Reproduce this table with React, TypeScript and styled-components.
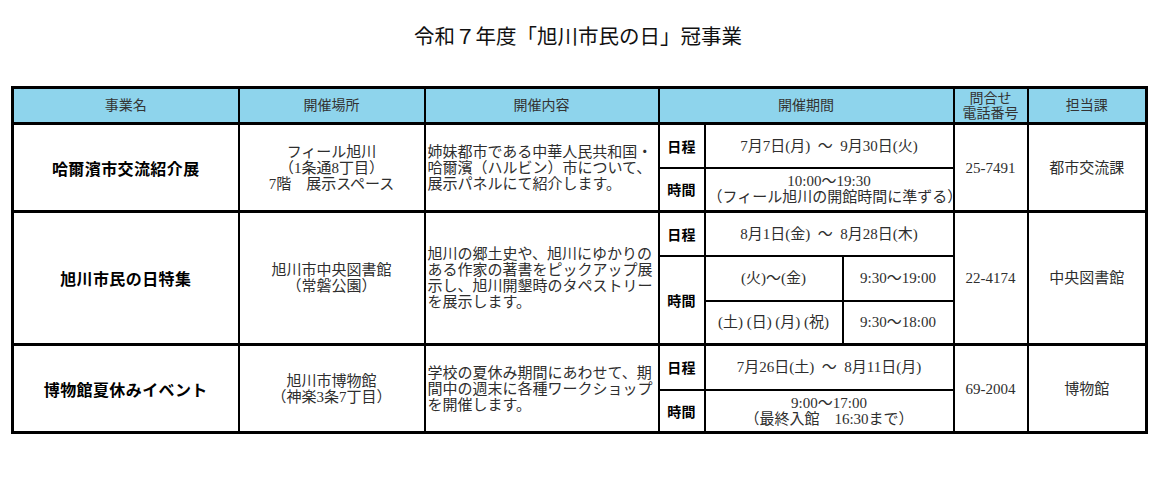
import styled, { createGlobalStyle } from 'styled-components';

const SERIF = `"Liberation Serif", "Noto Sans CJK JP", serif`;
const GOTHIC = `"Noto Sans CJK JP", "Liberation Sans", sans-serif`;

const GlobalStyle = createGlobalStyle`
  body {
    margin: 0;
    background: #fff;
  }
`;

const Page = styled.div`
  width: 1156px;
  height: 491px;
  padding-top: 21px;
  box-sizing: border-box;
`;

const Title = styled.h1`
  margin: 0 0 37px;
  text-align: center;
  font: 400 20.5px/28px ${GOTHIC};
  color: #111;
`;

const Table = styled.table`
  margin-left: 11px;
  width: 1134px;
  border-collapse: collapse;
  table-layout: fixed;
  border: 3px solid #000;
  color: #222;
`;

const HeadRow = styled.tr`
  height: 36px;
  background: #8ed4ec;
`;

const HeadCell = styled.th`
  border: 2px solid #000;
  border-bottom: 3px solid #000;
  padding: 0;
  text-align: center;
  vertical-align: middle;
  font: 400 14px/15px ${SERIF};
  color: #333;
`;

const Group = styled.tbody`
  border-top: 3px solid #000;
`;

const SubRow = styled.tr<{ $h: number }>`
  height: ${(p) => p.$h}px;
`;

const Cell = styled.td<{ $align?: 'left' | 'center' }>`
  border: 2px solid #000;
  padding: 0 2px;
  text-align: ${(p) => p.$align ?? 'center'};
  vertical-align: middle;
  white-space: nowrap;
  font: 400 15px/16px ${SERIF};
  color: #2e2e2e;
`;

const NameCell = styled(Cell)`
  font: 700 16px/20px ${GOTHIC};
  letter-spacing: 0.4px;
  color: #000;
`;

const LabelCell = styled(Cell)`
  font: 700 14px/16px ${GOTHIC};
  letter-spacing: 0.3px;
  color: #000;
`;

const Line = styled.span`
  display: block;
`;

type Slot = { days?: string; hours: string[] };

interface Event {
  name: string;
  place: string[];
  content: string[];
  date: string;
  times: Slot[];
  tel: string;
  dept: string;
  heights: number[];
}

const sp = '\u00a0\u00a0';

const events: Event[] = [
  {
    name: '哈爾濱市交流紹介展',
    place: ['フィール旭川', '（1条通8丁目）', '7階　展示スペース'],
    content: [
      '姉妹都市である中華人民共和国・',
      '哈爾濱（ハルビン）市について、',
      '展示パネルにて紹介します。',
    ],
    date: `7月7日(月)${sp}～${sp}9月30日(火)`,
    times: [{ hours: ['10:00～19:30', '（フィール旭川の開館時間に準ずる）'] }],
    tel: '25-7491',
    dept: '都市交流課',
    heights: [44, 44],
  },
  {
    name: '旭川市民の日特集',
    place: ['旭川市中央図書館', '（常磐公園）'],
    content: [
      '旭川の郷土史や、旭川にゆかりの',
      'ある作家の著書をピックアップ展',
      '示し、旭川開墾時のタペストリー',
      'を展示します。',
    ],
    date: `8月1日(金)${sp}～${sp}8月28日(木)`,
    times: [
      { days: '(火)～(金)', hours: ['9:30～19:00'] },
      { days: '(土) (日) (月) (祝)', hours: ['9:30～18:00'] },
    ],
    tel: '22-4174',
    dept: '中央図書館',
    heights: [44, 45, 44],
  },
  {
    name: '博物館夏休みイベント',
    place: ['旭川市博物館', '（神楽3条7丁目）'],
    content: [
      '学校の夏休み期間にあわせて、期',
      '間中の週末に各種ワークショップ',
      'を開催します。',
    ],
    date: `7月26日(土)${sp}～${sp}8月11日(月)`,
    times: [{ hours: ['9:00～17:00', '（最終入館　16:30まで）'] }],
    tel: '69-2004',
    dept: '博物館',
    heights: [45, 43],
  },
];

const Lines = ({ items }: { items: string[] }) => (
  <>
    {items.map((l, i) => (
      <Line key={i}>{l}</Line>
    ))}
  </>
);

function EventRows({ ev }: { ev: Event }) {
  const span = 1 + ev.times.length;
  return (
    <Group>
      <SubRow $h={ev.heights[0]}>
        <NameCell rowSpan={span}>{ev.name}</NameCell>
        <Cell rowSpan={span}>
          <Lines items={ev.place} />
        </Cell>
        <Cell rowSpan={span} $align="left">
          <Lines items={ev.content} />
        </Cell>
        <LabelCell>日程</LabelCell>
        <Cell colSpan={2}>{ev.date}</Cell>
        <Cell rowSpan={span}>{ev.tel}</Cell>
        <Cell rowSpan={span}>{ev.dept}</Cell>
      </SubRow>
      {ev.times.map((t, i) => (
        <SubRow key={i} $h={ev.heights[i + 1]}>
          {i === 0 && <LabelCell rowSpan={ev.times.length}>時間</LabelCell>}
          {t.days ? (
            <>
              <Cell>{t.days}</Cell>
              <Cell>
                <Lines items={t.hours} />
              </Cell>
            </>
          ) : (
            <Cell colSpan={2}>
              <Lines items={t.hours} />
            </Cell>
          )}
        </SubRow>
      ))}
    </Group>
  );
}

export default function App() {
  return (
    <Page>
      <GlobalStyle />
      <Title>令和７年度「旭川市民の日」冠事業</Title>
      <Table>
        <colgroup>
          <col style={{ width: 226 }} />
          <col style={{ width: 186 }} />
          <col style={{ width: 234 }} />
          <col style={{ width: 46 }} />
          <col style={{ width: 138 }} />
          <col style={{ width: 111 }} />
          <col style={{ width: 74 }} />
          <col style={{ width: 119 }} />
        </colgroup>
        <thead>
          <HeadRow>
            <HeadCell>事業名</HeadCell>
            <HeadCell>開催場所</HeadCell>
            <HeadCell>開催内容</HeadCell>
            <HeadCell colSpan={3}>開催期間</HeadCell>
            <HeadCell>
              問合せ
              <br />
              電話番号
            </HeadCell>
            <HeadCell>担当課</HeadCell>
          </HeadRow>
        </thead>
        {events.map((ev) => (
          <EventRows key={ev.name} ev={ev} />
        ))}
      </Table>
    </Page>
  );
}
